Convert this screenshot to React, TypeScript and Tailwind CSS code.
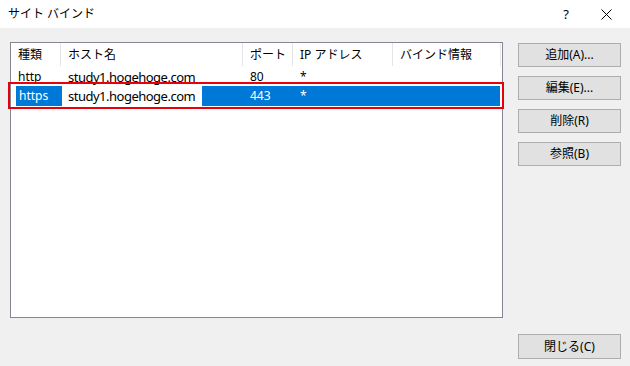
import React from "react";

const font = { fontFamily: '"Noto Sans", "Noto Sans CJK JP", sans-serif' };

function Btn({ label, className = "" }: { label: string; className?: string }) {
  return (
    <div
      className={
        "w-[103px] h-[24px] bg-[#e1e1e1] border border-[#adadad] flex items-center justify-center text-[12px] text-black leading-none " +
        className
      }
    >
      {label}
    </div>
  );
}

export default function App() {
  return (
    <div
      className="w-[630px] h-[366px] bg-[#f0f0f0] flex flex-col relative overflow-hidden text-black"
      style={font}
    >
      {/* title bar */}
      <div className="h-[28px] bg-white flex items-center pl-[8px] pr-[14px] shrink-0">
        <div className="text-[12px] leading-none">サイト バインド</div>
        <div className="flex-1" />
        <div className="text-[13px] leading-none mr-[32px]">?</div>
        <svg width="11" height="11" viewBox="0 0 11 11" className="mr-[4px]">
          <path d="M0.5 0.5 L10.5 10.5 M10.5 0.5 L0.5 10.5" stroke="#000" strokeWidth="1" />
        </svg>
      </div>

      <div className="flex pl-[10px] pt-[14px]">
        {/* list */}
        <div className="w-[493px] h-[276px] bg-white border border-[#828790] flex flex-col">
          <div className="h-[23px] flex text-[12px] leading-none shrink-0">
            <div className="w-[50px] border-r border-[#e5e5e5] pl-[7px] flex items-center">種類</div>
            <div className="w-[182px] border-r border-[#e5e5e5] pl-[7px] flex items-center">ホスト名</div>
            <div className="w-[50px] border-r border-[#e5e5e5] pl-[7px] flex items-center">ポート</div>
            <div className="w-[100px] border-r border-[#e5e5e5] pl-[7px] flex items-center">IP アドレス</div>
            <div className="w-[108px] border-r border-[#e5e5e5] pl-[7px] flex items-center">バインド情報</div>
          </div>
          <div className="h-[20px] flex items-center text-[12px] leading-none pt-[2px]">
            <div className="w-[50px] pl-[7px]">http</div>
            <div className="w-[182px] pl-[7px] text-[13px] tracking-[-0.5px]">study1.hogehoge.com</div>
            <div className="w-[50px] pl-[7px]">80</div>
            <div className="w-[100px] pl-[7px]">*</div>
          </div>
          <div className="h-[20px] flex text-[12px] leading-none">
            <div className="w-[5px]" />
            <div className="w-[46px] bg-[#0078d7] text-white pl-[3px] flex items-center">https</div>
            <div className="w-[140px] pl-[6px] flex items-center text-[13px] tracking-[-0.5px]">study1.hogehoge.com</div>
            <div className="w-[298px] bg-[#0078d7] text-white flex items-center">
              <div className="w-[48px]" />
              <div className="w-[50px]">443</div>
              <div>*</div>
            </div>
          </div>
        </div>

        {/* buttons */}
        <div className="flex flex-col gap-[9px] ml-[15px] pt-[1px]">
          <Btn label="追加(A)..." />
          <Btn label="編集(E)..." />
          <Btn label="削除(R)" />
          <Btn label="参照(B)" />
        </div>
      </div>

      <div className="flex justify-end pr-[9px] pt-[16px]">
        <Btn label="閉じる(C)" className="h-[25px]" />
      </div>

      {/* annotation */}
      <div className="absolute left-[8px] top-[82px] w-[496px] h-[27px] border-2 border-[#e8000b] pointer-events-none" />
    </div>
  );
}
